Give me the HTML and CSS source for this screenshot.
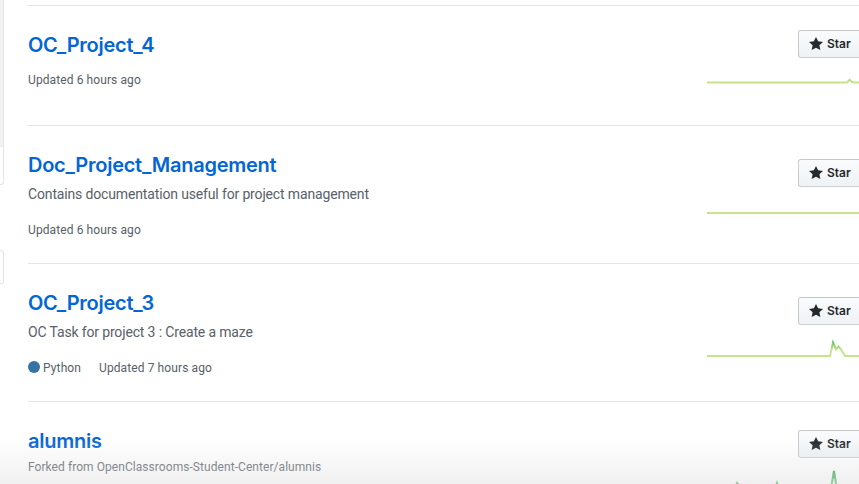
FILE: index.html
```html
<!DOCTYPE html>
<html lang="en">
<head>
<meta charset="utf-8">
<title>Repositories</title>
<link rel="stylesheet" href="styles.css">
</head>
<body>
<div class="page">
  <aside class="sidebar">
    <div class="side-box side-box-top"><div class="side-fill"></div></div>
    <div class="side-box side-box-small"></div>
  </aside>
  <ul class="repo-list">
    <li class="repo">
      <div class="repo-main">
        <h3 class="repo-title"><a href="#">OC_Project_4</a></h3>
        <div class="repo-meta">Updated 6 hours ago</div>
      </div>
      <div class="repo-side">
        <button class="star-btn"><svg class="star-icon" viewBox="0 0 14 16" width="14" height="16"><path d="M14 6l-4.9-.64L7 1 4.9 5.36 0 6l3.6 3.26L2.67 14 7 11.67 11.33 14l-.93-4.74L14 6z"/></svg>Star</button>
        <svg class="spark" width="155" height="43" viewBox="0 0 155 43">
          <defs>
            <linearGradient id="g1" x1="0" y1="44" x2="0" y2="0" gradientUnits="userSpaceOnUse">
              <stop offset="0%" stop-color="#c6e48b"/>
              <stop offset="45%" stop-color="#c6e48b"/>
              <stop offset="70%" stop-color="#7bc96f"/>
              <stop offset="100%" stop-color="#239a3b"/>
            </linearGradient>
          </defs>
          <path d="M0 24.5 L140 24.5 L142.5 21.8 L145 24 L147 24.5 L155 24.5" fill="none" stroke="url(#g1)" stroke-width="2"/>
        </svg>
      </div>
    </li>
    <li class="repo">
      <div class="repo-main">
        <h3 class="repo-title"><a href="#">Doc_Project_Management</a></h3>
        <p class="repo-desc">Contains documentation useful for project management</p>
        <div class="repo-meta">Updated 6 hours ago</div>
      </div>
      <div class="repo-side">
        <button class="star-btn"><svg class="star-icon" viewBox="0 0 14 16" width="14" height="16"><path d="M14 6l-4.9-.64L7 1 4.9 5.36 0 6l3.6 3.26L2.67 14 7 11.67 11.33 14l-.93-4.74L14 6z"/></svg>Star</button>
        <svg class="spark" width="155" height="43" viewBox="0 0 155 43">
          <path d="M0 26 L155 26" fill="none" stroke="#c6e48b" stroke-width="2"/>
        </svg>
      </div>
    </li>
    <li class="repo">
      <div class="repo-main">
        <h3 class="repo-title"><a href="#">OC_Project_3</a></h3>
        <p class="repo-desc">OC Task for project 3 : Create a maze</p>
        <div class="repo-meta"><span class="lang"><span class="lang-dot"></span> Python</span>Updated 7 hours ago</div>
      </div>
      <div class="repo-side">
        <button class="star-btn"><svg class="star-icon" viewBox="0 0 14 16" width="14" height="16"><path d="M14 6l-4.9-.64L7 1 4.9 5.36 0 6l3.6 3.26L2.67 14 7 11.67 11.33 14l-.93-4.74L14 6z"/></svg>Star</button>
        <svg class="spark" width="155" height="43" viewBox="0 0 155 43">
          <defs>
            <linearGradient id="g3" x1="0" y1="32" x2="0" y2="16" gradientUnits="userSpaceOnUse">
              <stop offset="0%" stop-color="#c6e48b"/>
              <stop offset="45%" stop-color="#c6e48b"/>
              <stop offset="100%" stop-color="#5fbf6a"/>
            </linearGradient>
          </defs>
          <path d="M0 31 L123 31 L126 17.5 L129 24.5 L131.5 21.5 L134 24.5 L138 31 L155 31" fill="none" stroke="url(#g3)" stroke-width="2"/>
        </svg>
      </div>
    </li>
    <li class="repo">
      <div class="repo-main">
        <h3 class="repo-title"><a href="#">alumnis</a></h3>
        <div class="repo-fork">Forked from OpenClassrooms-Student-Center/alumnis</div>
        <div class="repo-meta">Updated 7 hours ago</div>
      </div>
      <div class="repo-side">
        <button class="star-btn"><svg class="star-icon" viewBox="0 0 14 16" width="14" height="16"><path d="M14 6l-4.9-.64L7 1 4.9 5.36 0 6l3.6 3.26L2.67 14 7 11.67 11.33 14l-.93-4.74L14 6z"/></svg>Star</button>
        <svg class="spark" width="155" height="43" viewBox="0 0 155 43">
          <defs>
            <linearGradient id="g4" x1="0" y1="44" x2="0" y2="10" gradientUnits="userSpaceOnUse">
              <stop offset="0%" stop-color="#7bc96f"/>
              <stop offset="60%" stop-color="#40b85a"/>
              <stop offset="100%" stop-color="#239a3b"/>
            </linearGradient>
          </defs>
          <path d="M0 42 L24 42 L30 25 L34 29 L40 27 L44 31 L50 42 L64 42 L70 25 L74 34 L79 42 L120 42 L124 30 L127 13 L130 32 L134 42 L155 42" fill="none" stroke="url(#g4)" stroke-width="2"/>
        </svg>
      </div>
    </li>
  </ul>
</div>
<div class="bottom-fade"></div>
</body>
</html>
```

FILE: styles.css
```css
html, body {
  margin: 0;
  padding: 0;
  overflow: hidden;
  background: #ffffff;
}
body {
  font-family: Inter, "Noto Sans", "Liberation Sans", sans-serif;
  color: #24292e;
  width: 859px;
  height: 484px;
  position: relative;
}
.page {
  display: flex;
  align-items: flex-start;
  gap: 24px;
}
.sidebar {
  width: 4px;
  flex: 0 0 4px;
  display: flex;
  flex-direction: column;
}
.side-box {
  box-sizing: border-box;
  width: 4px;
  border: 1px solid #e1e4e8;
  border-left: none;
  background: #fff;
}
.side-box-top {
  margin-top: -10px;
  height: 195px;
  border-top: none;
  border-radius: 0 0 3px 0;
}
.side-fill {
  height: 157px;
  background: #f1f1f1;
}
.side-box-small {
  margin-top: 65px;
  height: 34px;
  border-radius: 0 3px 3px 0;
}
.repo-list {
  list-style: none;
  margin: 5px 0 0;
  padding: 0;
  width: 833px;
  flex: 0 0 833px;
}
.repo {
  display: flex;
  align-items: center;
  justify-content: space-between;
  border-top: 1px solid #e1e4e8;
  padding: 24px 0;
}
.repo-main {
  flex: 1 1 auto;
  align-self: flex-start;
}
.repo-title {
  margin: 0;
  font-size: 20px;
  line-height: 30px;
  font-weight: 600;
  letter-spacing: -0.25px;
}
.repo-title a {
  color: #0366d6;
  text-decoration: none;
}
.repo-desc {
  margin: 4px 0 0;
  font-family: Roboto, Inter, sans-serif;
  font-size: 14px;
  line-height: 21px;
  color: #586069;
  letter-spacing: -0.15px;
}
.repo-meta {
  margin-top: 11px;
  font-family: Roboto, Inter, sans-serif;
  font-size: 12px;
  line-height: 18px;
  color: #586069;
  letter-spacing: 0.1px;
}
.repo-desc + .repo-meta {
  margin-top: 16px;
}
.repo-fork {
  margin-top: 2px;
  font-family: Roboto, Inter, sans-serif;
  font-size: 12px;
  line-height: 18px;
  color: #586069;
  letter-spacing: 0.06px;
}
.repo-fork + .repo-meta {
  margin-top: 10px;
}
.lang {
  margin-right: 18px;
}
.lang-dot {
  display: inline-block;
  width: 12px;
  height: 12px;
  border-radius: 50%;
  background: #3572a5;
  position: relative;
  top: 1px;
}
.repo-side {
  flex: 0 0 156px;
  width: 156px;
  height: 71px;
  display: flex;
  flex-direction: column;
  align-items: flex-end;
}
.star-btn {
  box-sizing: border-box;
  height: 28px;
  width: 64px;
  padding: 3px 10px;
  display: flex;
  align-items: center;
  gap: 4px;
  font-family: Inter, sans-serif;
  font-size: 12px;
  line-height: 20px;
  font-weight: 600;
  color: #24292e;
  background-image: linear-gradient(-180deg, #fafbfc 0%, #eff3f6 90%);
  border: 1px solid rgba(27, 31, 35, 0.2);
  border-radius: 3px;
  margin-right: -1px;
}
.star-icon {
  fill: #24292e;
  flex: 0 0 14px;
}
.spark {
  display: block;
  margin-right: -1px;
}
.bottom-fade {
  position: absolute;
  left: 0;
  right: 0;
  bottom: 0;
  height: 46px;
  background: linear-gradient(to bottom, rgba(225, 225, 225, 0), rgba(225, 225, 225, 0.5));
  pointer-events: none;
}
```
